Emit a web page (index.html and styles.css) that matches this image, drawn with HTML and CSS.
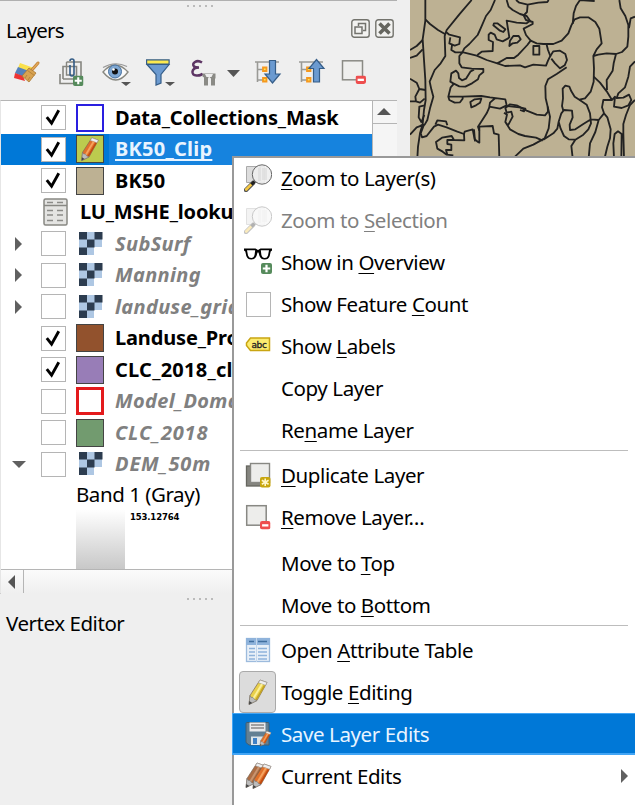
FILE: index.html
```
<!DOCTYPE html>
<html lang="en">

<head>
    <meta charset="UTF-8">
    <title>Layers</title>
    <link rel="stylesheet" href="styles.css">
</head>

<body>
    <!-- shared symbols -->
    <svg class="defs">
        <symbol id="raster" viewBox="0 0 24 24">
            <path fill="#aec7e3" d="M0 0h23v15h-8v8H0z" />
            <path fill="#2c3c4f" d="M0 0h8v7.5H0zM15.500 0h8v7.500h-8zM8 7.500h7.500v8H8zM0 15.500h8v7.500H0z" />
        </symbol>
        <symbol id="pencil" viewBox="0 0 28 28">
            <path d="M16 2l7 2.500-10 18-8 4 1-9z" fill="var(--pen)" stroke="#7b6652" stroke-width=".7" />
            <path d="M16 2l7 2.500-1.500 2.800-7-2.500z" fill="#eee" stroke="#999" stroke-width=".6" />
            <path d="M18 6L9 21" stroke="var(--lite)" stroke-width="2" />
            <path d="M20.500 7.500L12 22" stroke="var(--dark)" stroke-width="1.500" />
            <path d="M6 17.500L5 26.500l8-4-2.500-1-1.500-2-2-.2z" fill="#bcbcbc" stroke="#777" stroke-width=".6" />
            <path d="M5.300 23L5 26.500l3.200-1.600z" fill="#444" />
        </symbol>
        <symbol id="zoom" viewBox="0 0 28 28">
            <path d="M2.500 2.500h18v16h-18z" fill="#ddd" stroke="#aaa" />
            <path d="M2 26l7-7" stroke="#555" stroke-width="4.500" stroke-linecap="round" />
            <path d="M2.200 25.500l4.800-4.800" stroke="#f5c843" stroke-width="2.600" stroke-linecap="round" />
            <path d="M7.500 20.500l3-3" stroke="#222" stroke-width="3" />
            <circle cx="18" cy="10.500" r="9.700" fill="#eee" fill-opacity=".9" stroke="#666" stroke-width="1" />
            <path d="M14 4v13h3V3zM18 4h5v12h-5z" fill="#d8d8d8" opacity=".6" />
        </symbol>
        <symbol id="minus" viewBox="0 0 10 8">
            <rect width="10" height="8" rx="2" fill="#ee4e4e" />
            <rect x="2" y="3" width="6" height="2.200" fill="#fff" />
        </symbol>
        <symbol id="plus" viewBox="0 0 11 11">
            <rect width="11" height="11" rx="2" fill="#568b5c" />
            <path d="M5.500 1.800v7.400M1.800 5.500h7.400" stroke="#fff" stroke-width="2.200" />
        </symbol>
        <symbol id="tick" viewBox="0 0 24 24">
            <path d="M5 11.500l5 6.500L17.500 4.500" fill="none" stroke="#000" stroke-width="3" />
        </symbol>
    </svg>

    <div class="dock">
        <div class="handle"><i></i><i></i><i></i><i></i><i></i></div>
        <div class="title-bar">
            <span class="label">Layers</span>
            <svg class="win-btn" viewBox="0 0 19 19">
                <rect x=".8" y=".8" width="17.400" height="17.400" rx="2.500" fill="#f2f2f0" stroke="#73736d" stroke-width="1.400" />
                <path d="M7.500 7V4.500h7v7H12M4 8h7v6.500H4z" fill="none" stroke="#73736d" stroke-width="1.500" />
            </svg>
            <svg class="win-btn" viewBox="0 0 19 19">
                <rect x=".8" y=".8" width="17.400" height="17.400" rx="2.500" fill="#f2f2f0" stroke="#73736d" stroke-width="1.400" />
                <path d="M4.500 4.500l10 10M14.500 4.500l-10 10" stroke="#66665f" stroke-width="3.600" />
            </svg>
        </div>

        <svg class="toolbar" viewBox="0 50 396 50">
            <!-- style -->
            <path d="M20 63l14 5-6 5-10-5z" fill="#fae04b" />
            <path d="M18 67l11 4-6 6-8-4z" fill="#5581bb" />
            <path d="M15 73l8 3 2 5-11-3z" fill="#ee3434" />
            <path d="M38 63l-7 8" stroke="#c28134" stroke-width="3" stroke-linecap="round" />
            <path d="M38 63l-7 8" stroke="#e0a75a" stroke-width="1.500" stroke-linecap="round" />
            <path d="M29 68l7 5-7 9-7-6z" fill="#d8a351" stroke="#a97734" stroke-width=".8" />
            <path d="M27.500 70.500l7 5M27 75l-2 3M30 77l-2 3" stroke="#b07c35" stroke-width=".8" fill="none" />
            <!-- add group -->
            <path d="M66.500 62h14.500v14M63 79V66.500h13.500v10M60 74v9.500h14M63 79h10" fill="none" stroke="#868680" stroke-width="1.600" />
            <path d="M66.500 62v13H73" fill="none" stroke="#868680" stroke-width="1.400" />
            <path d="M70 65v9q0 2 2 2t2-2V61q0-2-2-2t-2 2" fill="none" stroke="#335b85" stroke-width="1.600" />
            <use href="#plus" x="73" y="75.500" width="10.500" height="10.500" />
            <!-- visibility -->
            <path d="M103 72q12-14 25 0-12 16-25 0z" fill="#fafafa" stroke="#888880" stroke-width="1.400" />
            <path d="M103 67.500q12-7 24-1" fill="none" stroke="#999" stroke-width="1.200" />
            <circle cx="115" cy="71.500" r="6.500" fill="#7fa8d3" stroke="#45709f" stroke-width="1" />
            <circle cx="115" cy="71.500" r="3" fill="#111" />
            <circle cx="113.500" cy="69.500" r="1.300" fill="#fff" />
            <path d="M121 82h10l-5 4z" fill="#555" />
            <!-- filter -->
            <path d="M147 64.500l9 10V85l5-2v-8.500l8-10z" fill="#6b9ad0" stroke="#355d88" stroke-width="1.200" />
            <path d="M146.600 59.800h22.500v4.200h-22.500z" fill="#fce94f" stroke="#355d88" stroke-width="1.200" />
            <path d="M165 82h10l-5 4z" fill="#555" />
            <!-- expression filter -->
            <path d="M202 62.500q-4-2.500-7-.5t-1 4.500q1 1 5 1-6 .3-6.500 4t4 4 6-2" fill="none" stroke="#5d3564" stroke-width="2.500" />
            <path d="M202.500 73.500h13v5h-.5v7h-4v-7l-2-2-1 2v7h-4v-8l-1.500-1z" fill="#8a8a85" />
            <path d="M205 74h8l-1.500 3h-5z" fill="#eee" />
            <path d="M227 70h13l-6.500 7z" fill="#555" />
            <!-- expand all -->
            <path d="M255 62h24M257.500 62v20M257.500 69.500h6M257.500 80h6" fill="none" stroke="#9a9a96" stroke-width="1.600" />
            <path d="M263 67.500h3.500v3.500H263zM263 78h3.500v3.500H263z" fill="#fce94f" stroke="#f5981e" stroke-width="1.800" />
            <path d="M269.500 60.500h6v13.500h4.500l-7.500 9-7.500-9h4.500z" fill="#6b9ad0" stroke="#355d88" stroke-width="1.200" />
            <!-- collapse all -->
            <path d="M299 62h24M301.500 62v20M301.500 69.500h6M301.500 80h6" fill="none" stroke="#9a9a96" stroke-width="1.600" />
            <path d="M307 67.500h3.500v3.500H307zM307 78h3.500v3.500H307z" fill="#fce94f" stroke="#f5981e" stroke-width="1.800" />
            <path d="M313.500 82v-13.500H309l7.500-9 7.500 9h-4.500V82z" fill="#6b9ad0" stroke="#355d88" stroke-width="1.200" />
            <!-- remove -->
            <rect x="342.500" y="60.800" width="20" height="19" fill="#efefed" stroke="#8a8a84" stroke-width="1.500" />
            <use href="#minus" x="355.500" y="75.500" width="10.500" height="8.500" />
        </svg>

        <div class="tree">
            <div class="rows">
                <div class="row">
                    <i class="arrow"></i><svg class="check"><use href="#tick" /></svg>
                    <i class="swatch mask"></i><b>Data_Collections_Mask</b>
                </div>
                <div class="row selected">
                    <i class="arrow"></i><svg class="check"><use href="#tick" /></svg>
                    <svg class="swatch clip"><use href="#pencil" /></svg><b class="wide"><u>BK50_Clip</u></b>
                </div>
                <div class="row">
                    <i class="arrow"></i><svg class="check"><use href="#tick" /></svg>
                    <i class="swatch bk50"></i><b class="wide">BK50</b>
                </div>
                <div class="row table-row">
                    <i class="arrow"></i>
                    <svg class="table-icon" viewBox="0 0 25 28">
                        <rect x="1" y="1" width="23" height="26" rx="1.500" fill="#e4e4e2" stroke="#888883" stroke-width="1.500" />
                        <path d="M1 7.500h23" stroke="#888883" stroke-width="1.500" />
                        <path d="M4 4.500h6M14 4.500h6M4 12.500h6M14 12.500h6M4 17h6M14 17h6M4 22.500h6M14 22.500h6" stroke="#8b8b88" stroke-width="1.500" />
                    </svg>
                    <b>LU_MSHE_lookup</b>
                </div>
                <div class="row off">
                    <i class="arrow closed"></i><svg class="check"></svg>
                    <svg class="grid"><use href="#raster" /></svg><b>SubSurf</b>
                </div>
                <div class="row off">
                    <i class="arrow closed"></i><svg class="check"></svg>
                    <svg class="grid"><use href="#raster" /></svg><b>Manning</b>
                </div>
                <div class="row off">
                    <i class="arrow closed"></i><svg class="check"></svg>
                    <svg class="grid"><use href="#raster" /></svg><b>landuse_grid</b>
                </div>
                <div class="row">
                    <i class="arrow"></i><svg class="check"><use href="#tick" /></svg>
                    <i class="swatch landuse"></i><b>Landuse_Proj</b>
                </div>
                <div class="row">
                    <i class="arrow"></i><svg class="check"><use href="#tick" /></svg>
                    <i class="swatch clc-clip"></i><b class="wide">CLC_2018_clip</b>
                </div>
                <div class="row off">
                    <i class="arrow"></i><svg class="check"></svg>
                    <i class="swatch domain"></i><b>Model_Domain</b>
                </div>
                <div class="row off">
                    <i class="arrow"></i><svg class="check"></svg>
                    <i class="swatch clc"></i><b class="wider">CLC_2018</b>
                </div>
                <div class="row off">
                    <i class="arrow open"></i><svg class="check"></svg>
                    <svg class="grid"><use href="#raster" /></svg><b class="wider">DEM_50m</b>
                </div>
                <div class="band label">Band 1 (Gray)</div>
                <div class="legend">
                    <i class="ramp"></i>
                    <span>153.12764</span>
                </div>
            </div>
            <div class="v-scroll"><i></i></div>
            <div class="h-scroll"><i></i></div>
        </div>

        <div class="handle"><i></i><i></i><i></i><i></i><i></i></div>
        <div class="vertex label">Vertex Editor</div>
    </div>

    <svg class="map" viewBox="0 0 675 474">
        <g fill="none" stroke="#222" stroke-width="5.500" stroke-linejoin="round">
            <path d="M46 0V62L38 118 42 180 46 240 47 300 42 330 38 372 30 400 24 440 22 474" />
            <path d="M46 58L60 72 84 90 106 103M185 0L148 43 110 90 104 108 106 168 92 190 74 210 59 245 64 268 70 290 60 325 52 360 44 374 30 378" />
            <path d="M255 0L242 30 228 48 212 85 203 105 178 132 163 145 157 157 148 168 148 190 155 202 185 206 220 207 220 216 208 226 204 238 186 250 166 260 148 259 130 250 121 245 124 220 138 212 145 220 147 234 156 241 168 236 182 214 192 209" />
            <path d="M108 96L118 104 150 112 148 132 134 137 118 130 121 112M126 136L124 150 136 157 160 157 200 167 230 180 262 190 285 198 330 196 345 202 370 194 408 197 414 182 421 168 414 150 410 134" />
            <path d="M202 165L215 155 248 153 249 126 236 120 236 104 242 98 254 104 260 118 278 124 293 116 298 112 290 62 320 68 350 70 360 62 350 48 330 42 308 30 296 20 290 0" />
            <path d="M252 70L262 70 286 88 280 96 270 92 250 76zM298 138L300 122 310 108 326 108 332 118 322 128 308 130zM370 138h18v26h-18z" />
            <path d="M318 0L328 8 353 14 385 8 412 6 416 0M353 14L351 36 341 46 348 60 368 66 368 72 341 86 348 105 362 122 352 135 325 164 312 174 290 174 262 190" />
            <path d="M362 122L380 130 400 132 430 132 455 122 475 100 484 76 494 58 510 52 535 52 556 66 568 86 575 130 560 148 550 168 552 205 551 245 542 275 525 295 508 299 494 290 484 274 478 260 466 257 458 266 459 295 456 318 460 332" />
            <path d="M488 72L491 40 498 18 510 0 554 3M421 168L430 154 450 152 466 162 471 180 464 196 450 205 435 190 424 176M470 202L440 222 414 238 406 258 407 295 413 320 414 335 405 346 380 344 350 332 320 316 300 313 286 324 290 338 304 335 308 350 294 376 286 366 291 344 282 338M291 344L286 366 300 388 325 402 345 408 378 413 398 422" />
            <path d="M413 320L420 350 416 385 404 415 370 434 340 446 315 470M400 419L430 400 442 386 446 365 454 340 462 330 486 332 488 352 479 374 480 390 496 388 520 372 543 358 566 360M446 365L452 386 462 408 476 418 496 419 484 438 488 474M496 419L520 404 535 388 543 370 540 340 530 314 508 299" />
            <path d="M628 0L632 25 646 48 655 75 655 110 652 140 636 156 618 162 590 160 565 164 550 168M675 50L662 55 657 84M618 162L611 190 608 212 590 240 591 270M551 230L570 248 590 274 606 300 615 290 612 320 635 324 655 316 664 300 657 284 640 293 620 294 625 280 645 262 655 230 660 200 675 184" />
            <path d="M606 300L580 300 576 322 582 340 566 360 556 396 540 430 536 474M582 340L592 352 602 388 600 415 592 440 584 474M675 300L660 315 648 345 640 372 640 400 642 474M612 474L610 430 614 402 624 394 635 402 634 474M0 150L20 138 38 120M0 174L20 167 38 148M0 236L20 248 28 267 47 270M28 267L16 290 18 304 30 308 44 296M0 304L18 304M44 316L28 320 26 352 34 366 43 345M0 404L20 382 42 374M42 374L32 400 36 412 50 408 72 380 84 374 110 382 140 394 162 402 164 395 188 388 194 418 204 426 208 428 208 388 208 380 248 378 252 400 266 404 268 474" />
            <path d="M76 374L82 361 108 364 112 376M192 388L195 424M132 251L122 262 115 290 118 300 134 308 150 307 158 296 158 290 214 288 240 292 286 298 290 316 270 326 238 320 240 308 256 294M118 290h40M184 322L181 306 194 298 214 296 210 308 198 316zM238 322L230 340 204 380 208 392M290 318L328 322 346 326 342 334 330 330M162 402L163 421 132 420 125 408 96 413 78 426 82 446 98 455 110 464 130 466M132 420L112 420 112 432 124 434 124 450 108 450 112 464" />
        </g>
    </svg>

    <div class="menu">
        <div class="item"><svg class="icon"><use href="#zoom" /></svg><span><u>Z</u>oom to Layer(s)</span></div>
        <div class="item disabled"><svg class="icon"><use href="#zoom" /></svg><span>Zoom to <u>S</u>election</span></div>
        <div class="item">
            <svg class="icon" viewBox="0 0 28 28">
                <path d="M0 0.500h11.500l2.500 1.500L16.500.5H28v2l-1.300 1-1 4.500Q24.500 11.500 20.700 11.500T15.500 8l-1-3.500h-1L12.500 8Q11 11.500 7.300 11.500T2.300 8l-1-4.500L0 2.500z" fill="#000" />
                <path d="M3 2.200h8.200l-.6 4.600Q9.800 10 7.300 10T4 7.500zM16.800 2.200H25l-1 5.300Q23.200 10 20.700 10T17.400 7z" fill="#fff" />
                <use href="#plus" x="17" y="15" width="11" height="11" />
            </svg>
            <span>Show in <u>O</u>verview</span>
        </div>
        <div class="item"><svg class="icon box"></svg><span>Show Feature <u>C</u>ount</span></div>
        <div class="item">
            <svg class="icon" viewBox="0 0 28 28">
                <path d="M6.500 6h19v12.500h-19L2.500 13.500v-2.500z" fill="#fcec70" stroke="#c9a512" stroke-width="1.500" />
                <text x="7.500" y="16" class="abc">abc</text>
            </svg>
            <span>Show <u>L</u>abels</span>
        </div>
        <div class="item"><i class="icon"></i><span>Copy Layer</span></div>
        <div class="item"><i class="icon"></i><span>Re<u>n</u>ame Layer</span></div>
        <div class="sep"></div>
        <div class="item">
            <svg class="icon" viewBox="0 0 28 28">
                <rect x="2.500" y="5" width="20" height="20" fill="#85857f" stroke="#66665f" stroke-width="1.300" />
                <rect x="6.500" y="2.500" width="19" height="19" fill="#ededeb" stroke="#888883" stroke-width="1.400" />
                <rect x="16" y="16" width="10.500" height="10.500" rx="2" fill="#c8a60e" />
                <path d="M21.200 17.500v7.500M17.800 19.200l6.800 4M24.600 19.200l-6.800 4" stroke="#fff6c9" stroke-width="1.600" />
            </svg>
            <span><u>D</u>uplicate Layer</span>
        </div>
        <div class="item">
            <svg class="icon" viewBox="0 0 28 28">
                <rect x="2.700" y="2.700" width="19.500" height="19.500" fill="#ededeb" stroke="#888883" stroke-width="1.500" />
                <use href="#minus" x="16" y="18" width="10.500" height="8.500" />
            </svg>
            <span><u>R</u>emove Layer…</span>
        </div>
        <div class="item move"><i class="icon"></i><span>Move to <u>T</u>op</span></div>
        <div class="item"><i class="icon"></i><span>Move to <u>B</u>ottom</span></div>
        <div class="sep"></div>
        <div class="item">
            <svg class="icon" viewBox="0 0 28 28">
                <rect x="2.500" y="2.500" width="23" height="23" fill="#e9f0f8" stroke="#9dbbdd" stroke-width="1.300" />
                <path d="M2 2h24v7H2z" fill="#8fb3db" />
                <path d="M5 5.500h5M14 5.500h9" stroke="#416f9f" stroke-width="1.500" />
                <path d="M12.500 2v24" stroke="#c4d7ec" />
                <path d="M5 12.500h6M14 12.500h9M5 16h6M14 16h9M5 19.500h6M14 19.500h9M5 23h6M14 23h9" stroke="#8fb3db" stroke-width="1.400" />
            </svg>
            <span>Open <u>A</u>ttribute Table</span>
        </div>
        <div class="item"><i class="pressed"></i><svg class="icon yellow"><use href="#pencil" /></svg><span>Toggle <u>E</u>diting</span></div>
        <div class="item active">
            <svg class="icon" viewBox="0 0 28 28">
                <path d="M3 2.500h21q1 0 1 1V25H5l-3-2.500V3.500q0-1 1-1z" fill="#638093" stroke="#405e73" />
                <path d="M5.500 2.500h16v9h-16z" fill="#e9eaec" />
                <path d="M7 5h13M7 8h13" stroke="#888" stroke-width="1.300" />
                <path d="M7 16.500h13V25H7z" fill="#dce5ea" />
                <path d="M9 18h4v6H9z" fill="#3f81c5" />
                <svg class="orange" x="13" y="9" width="17" height="19"><use href="#pencil" /></svg>
            </svg>
            <span>Save Layer Edits</span>
        </div>
        <div class="item">
            <svg class="icon orange" viewBox="0 0 28 28">
                <use class="brown" href="#pencil" x="-3" y="-1" width="28" height="28" />
                <use href="#pencil" x="4" y="0" width="28" height="28" />
            </svg>
            <span>Current Edits</span><i class="more"></i>
        </div>
    </div>
</body>

</html>
```
FILE: styles.css
```
body {
    margin: 0;
    width: 635px;
    height: 805px;
    overflow: hidden;
    position: relative;
    display: flex;
    background: #efefef;
    font: 20.5px/30px "Noto Sans", sans-serif;
    color: #000;
}

* {
    box-sizing: border-box;
}

.defs {
    position: absolute;
    width: 0;
    height: 0;
}

.label {
    letter-spacing: -.45px;
}

/* left dock */
.dock {
    width: 397px;
    margin-right: 13px;
    flex: none;
    border-top: 1px solid #b0b0b0;
}

.handle {
    display: flex;
    gap: 4px;
    height: 9px;
    padding: 4px 0 0 187px;
}

.handle i {
    width: 2px;
    height: 2px;
    background: #bbb;
}

.title-bar {
    display: flex;
    align-items: center;
    height: 40px;
    padding-left: 6px;
}

.title-bar .label {
    flex: 1;
    padding-bottom: 1px;
    letter-spacing: -.8px;
}

.win-btn {
    width: 19px;
    height: 19px;
    margin: 0 0 3px 5px;
}

.win-btn:last-child {
    margin-right: 3px;
}

.toolbar {
    display: block;
    width: 396px;
    height: 50px;
}

/* layer tree */
.tree {
    display: grid;
    grid-template: 468px 25px / 371px 25px;
    height: 494px;
    border: 1px solid #b5b5b5;
    border-left-color: #e6e6e6;
    background: #fff;
}

.rows {
    padding-top: 1px;
    overflow: hidden;
    white-space: nowrap;
}

.row {
    display: grid;
    grid-template-columns: 40px 35px 39px 1fr;
    align-items: center;
    height: 31.5px;
}

.table-row {
    grid-template-columns: 40px 39px 1fr;
}

.row b {
    font-size: 20px;
    letter-spacing: -.15px;
}

.row .wide {
    letter-spacing: .25px;
}

.off b {
    color: #808080;
    font-style: italic;
    letter-spacing: .35px;
}

.off .wider {
    letter-spacing: .85px;
}

.selected {
    background: linear-gradient(90deg, #0078d7 108px, #1683de 108px);
    color: #e8f4ff;
}

.check {
    width: 25px;
    height: 25px;
    border: 1.500px solid #b5b5b5;
    background: #fff;
}

.swatch {
    width: 28px;
    height: 28px;
    border: 1px solid #444;
}

.mask {
    border: 2px solid #2a1fe0;
}

.clip {
    background: #bccb4e;
    --pen: #e0702a;
    --lite: #f5a25e;
    --dark: #c0490f;
}

.bk50 {
    background: #bdb193;
}

.landuse {
    background: #92522d;
}

.clc-clip {
    background: #987db7;
}

.domain {
    border: 3px solid #e31a1c;
}

.clc {
    background: #729b6f;
}

.grid {
    width: 24px;
    height: 24px;
    margin-left: 3px;
}

.table-icon {
    width: 25px;
    height: 28px;
    margin-left: 2px;
}

.closed {
    margin-left: 14px;
    width: 0;
    border: 7px solid transparent;
    border-left-color: #606060;
    border-right: 0;
}

.open {
    margin-left: 11px;
    width: 0;
    border: 7px solid transparent;
    border-top-color: #606060;
    border-bottom: 0;
}

.band {
    height: 29px;
    padding-left: 75px;
    line-height: 28px;
}

.legend {
    display: flex;
    padding-left: 75px;
}

.ramp {
    width: 49px;
    height: 60px;
    background: linear-gradient(#fff, #c8c8c8);
}

.legend span {
    margin: 3px 0 0 5px;
    font: bold 8.500px/10px "DejaVu Sans", sans-serif;
    letter-spacing: -.15px;
}

.v-scroll {
    border-left: 1px solid #b5b5b5;
    background: #f5f5f5;
}

.v-scroll i {
    display: block;
    height: 23px;
    border-bottom: 1px solid #b5b5b5;
}

.v-scroll i::before {
    content: "";
    display: block;
    width: 0;
    margin-left: 4px;
    border: 7px solid transparent;
    border-bottom-color: #555;
}

.h-scroll {
    grid-column: span 2;
    border-top: 1px solid #b5b5b5;
    background: linear-gradient(#fbfbfb, #efefef);
}

.h-scroll i {
    display: block;
    width: 23px;
    height: 23px;
    padding: 5px 0 0 7px;
    border-right: 1px solid #b5b5b5;
}

.h-scroll i::before {
    content: "";
    display: block;
    width: 0;
    border: 7px solid transparent;
    border-left: 0;
    border-right-color: #555;
}

.vertex {
    padding: 5px 0 0 6px;
}

/* map canvas */
.map {
    flex: none;
    width: 225px;
    height: 158px;
    background: #bdb193;
}

/* context menu */
.menu {
    position: absolute;
    left: 232px;
    top: 156px;
    width: 410px;
    height: 660px;
    border: 2px solid #999;
    background: #fff;
}

.item {
    display: flex;
    align-items: center;
    position: relative;
    height: 42px;
    padding-left: 10px;
    letter-spacing: -.4px;
    white-space: nowrap;
}

.item:first-child {
    margin-top: -1px;
}

.item u,
.selected u {
    text-decoration-thickness: 1px;
    text-underline-offset: 3px;
}

.selected u {
    text-decoration-thickness: 2px;
    text-decoration-skip-ink: none;
}

.icon {
    flex: none;
    position: relative;
    width: 28px;
    height: 28px;
    margin-right: 9px;
}

.box {
    width: 25px;
    height: 25px;
    margin: 0 10px 0 2px;
    border: 1.500px solid #b5b5b5;
}

.abc {
    font: 9px "DejaVu Sans", sans-serif;
    fill: #222;
    stroke: #222;
    stroke-width: .3px;
}

.disabled {
    color: #808080;
}

.disabled .icon {
    opacity: .35;
}

.sep {
    height: 4px;
    margin: -1px 12px 0 6px;
    border-top: 1px solid #bdbdbd;
}

.move {
    margin-top: 4px;
}

.pressed {
    position: absolute;
    left: 5px;
    top: 0;
    width: 37px;
    height: 42px;
    border: 1.500px solid #aaa;
    border-radius: 4px;
    background: #dcdcdc;
}

.yellow {
    --pen: #e9d04b;
    --lite: #fbf09a;
    --dark: #c4a424;
}

.orange {
    --pen: #e0702a;
    --lite: #f5a25e;
    --dark: #c0490f;
}

.brown {
    --pen: #ad6d43;
    --lite: #c79470;
    --dark: #8a4c24;
}

.active {
    margin-left: -2px;
    padding-left: 11px;
    border: 1px solid #42a5f5;
    border-bottom-width: 2px;
    background: #0078d7;
    color: #e8f4ff;
}

.more {
    position: absolute;
    right: 12px;
    border: 7px solid transparent;
    border-left-color: #606060;
    border-right: 0;
}
```
